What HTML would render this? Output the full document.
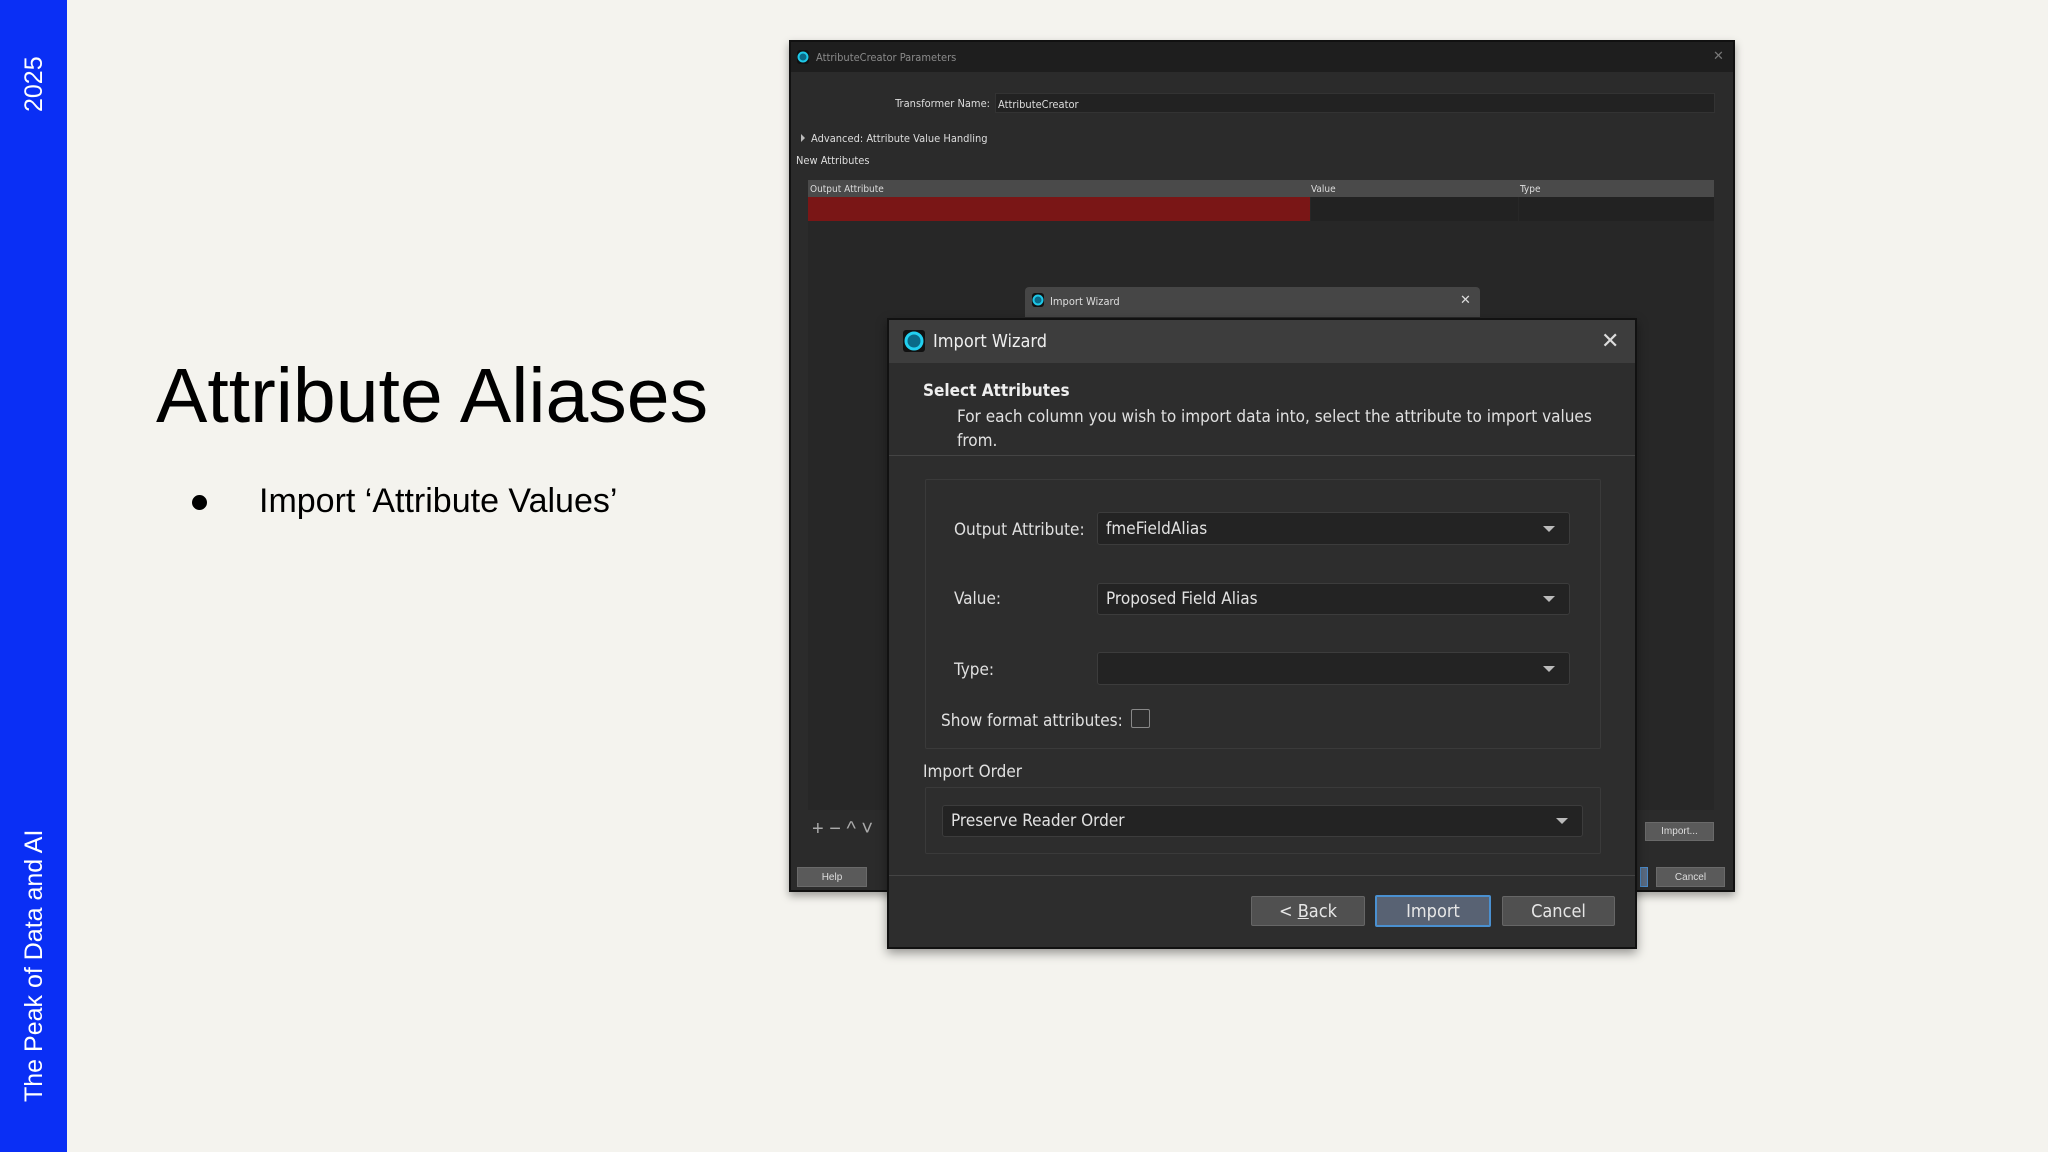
<!DOCTYPE html>
<html><head><meta charset="utf-8"><style>
*{margin:0;padding:0;box-sizing:border-box}
body{width:2048px;height:1152px;background:#f4f3ee;position:relative;overflow:hidden;font-family:"Liberation Sans",sans-serif}
.a{position:absolute}
.side{left:0;top:0;width:67px;height:1152px;background:#0a2ff5}
.vt{color:#fff;font-size:25px;white-space:nowrap;transform-origin:0 0;transform:rotate(-90deg)}
.ui{font-family:"DejaVu Sans Condensed","Liberation Sans Narrow","Liberation Sans",sans-serif}
.combo{position:absolute;background:#232323;border:1px solid #3c3c3c;border-radius:3px;color:#e2e2e2;font-size:17px;padding-left:8px;display:flex;align-items:center}
.combo:after{content:"";position:absolute;right:14px;top:50%;margin-top:-3px;border-left:6px solid transparent;border-right:6px solid transparent;border-top:6px solid #bbb}
.lbl{position:absolute;color:#e0e0e0;font-size:17px;transform:translateY(-50%)}
.btn{position:absolute;background:#505050;border:1px solid #666;border-radius:2px;color:#e6e6e6;font-size:18px;display:flex;align-items:center;justify-content:center}
.sb{position:absolute;background:#5a5a5a;border:1px solid #6a6a6a;color:#ddd;font-size:10px;display:flex;align-items:center;justify-content:center}
.ico{position:absolute;background:#111;border-radius:3px}
.ico:after{content:"";position:absolute;left:50%;top:50%;width:7px;height:7px;transform:translate(-50%,-50%);border-radius:50%;border:2px solid #1ec8e8;background:#0a6a88}
.ico.big:after{width:13px;height:13px;border:3px solid #22d0f0;background:#0a6a88}
</style></head><body>
<div class="a side"></div>
<div class="a vt" style="left:20px;top:112px">2025</div>
<div class="a vt" style="left:20px;top:1102px">The Peak of Data and AI</div>
<div class="a" style="left:156px;top:352px;font-size:77px;color:#000;white-space:nowrap">Attribute Aliases</div>
<div class="a" style="left:192px;top:495px;width:15px;height:15px;border-radius:50%;background:#000"></div>
<div class="a" style="left:259px;top:482px;font-size:34px;color:#000;white-space:nowrap">Import ‘Attribute Values’</div>

<div class="a" style="left:789px;top:40px;width:946px;height:852px;background:#2b2b2b;border:2px solid #111;box-shadow:0 4px 8px rgba(0,0,0,.35)"></div>
<div class="a" style="left:791px;top:42px;width:942px;height:30px;background:#1e1e1e"></div>
<div class="ico" style="left:797px;top:50px;width:12px;height:14px"></div>
<div class="a ui" style="left:816px;top:51px;font-size:11px;color:#8a8a8a">AttributeCreator Parameters</div>
<div class="a" style="left:1713px;top:48px;font-size:13px;color:#777">✕</div>
<div class="a ui" style="left:860px;top:97px;width:130px;text-align:right;font-size:11px;color:#ddd">Transformer Name:</div>
<div class="a" style="left:995px;top:93px;width:720px;height:20px;background:#222;border:1px solid #333"></div>
<div class="a ui" style="left:998px;top:98px;font-size:11px;color:#ddd">AttributeCreator</div>
<div class="a" style="left:801px;top:134px;border-top:4px solid transparent;border-bottom:4px solid transparent;border-left:4px solid #bbb"></div>
<div class="a ui" style="left:811px;top:132px;font-size:11px;color:#ddd">Advanced: Attribute Value Handling</div>
<div class="a ui" style="left:796px;top:154px;font-size:11px;color:#ddd">New Attributes</div>
<div class="a" style="left:808px;top:180px;width:906px;height:630px;background:#272727"></div>
<div class="a" style="left:808px;top:180px;width:906px;height:17px;background:#4a4a4a"></div>
<div class="a ui" style="left:810px;top:184px;font-size:10px;color:#ddd">Output Attribute</div>
<div class="a ui" style="left:1311px;top:184px;font-size:10px;color:#ddd">Value</div>
<div class="a ui" style="left:1520px;top:184px;font-size:10px;color:#ddd">Type</div>
<div class="a" style="left:808px;top:197px;width:502px;height:24px;background:#7a1616"></div>
<div class="a" style="left:1311px;top:197px;width:207px;height:24px;background:#222"></div>
<div class="a" style="left:1519px;top:197px;width:195px;height:24px;background:#222"></div>
<div class="a" style="left:1025px;top:287px;width:455px;height:30px;background:#464646;border-radius:4px 4px 0 0"></div>
<div class="ico" style="left:1032px;top:293px;width:12px;height:14px"></div>
<div class="a ui" style="left:1050px;top:295px;font-size:11px;color:#ddd">Import Wizard</div>
<div class="a" style="left:1460px;top:292px;font-size:13px;color:#ddd">✕</div>
<div class="a" style="left:812px;top:818px;font-size:20px;color:#aaa">+ − ^ ˅</div>
<div class="sb" style="left:1645px;top:822px;width:69px;height:19px">Import...</div>
<div class="sb" style="left:797px;top:867px;width:70px;height:20px">Help</div>
<div class="sb" style="left:1656px;top:867px;width:69px;height:20px">Cancel</div>
<div class="a" style="left:1640px;top:867px;width:8px;height:20px;background:#5a6a80;border:1px solid #4a8ac8"></div>

<div class="a" style="left:887px;top:318px;width:750px;height:631px;background:#2d2d2d;border:2px solid #111;box-shadow:0 4px 10px rgba(0,0,0,.4)"></div>
<div class="a" style="left:889px;top:320px;width:746px;height:43px;background:#3d3d3d"></div>
<div class="ico big" style="left:903px;top:330px;width:22px;height:22px"></div>
<div class="a ui" style="left:933px;top:331px;font-size:18px;color:#eee">Import Wizard</div>
<div class="a" style="left:1601px;top:328px;font-size:22px;color:#ddd">✕</div>
<div class="a ui" style="left:923px;top:381px;font-size:17px;font-weight:bold;color:#eee">Select Attributes</div>
<div class="a ui" style="left:957px;top:405px;font-size:17px;color:#e0e0e0;line-height:24px;width:640px">For each column you wish to import data into, select the attribute to import values from.</div>
<div class="a" style="left:889px;top:455px;width:746px;height:1px;background:#444"></div>
<div class="a" style="left:925px;top:479px;width:676px;height:270px;border:1px solid #3a3a3a;border-radius:2px"></div>
<div class="lbl ui" style="left:954px;top:530px">Output Attribute:</div>
<div class="combo ui" style="left:1097px;top:512px;width:473px;height:33px">fmeFieldAlias</div>
<div class="lbl ui" style="left:954px;top:599px">Value:</div>
<div class="combo ui" style="left:1097px;top:583px;width:473px;height:32px">Proposed Field Alias</div>
<div class="lbl ui" style="left:954px;top:670px">Type:</div>
<div class="combo ui" style="left:1097px;top:652px;width:473px;height:33px"></div>
<div class="lbl ui" style="left:941px;top:721px">Show format attributes:</div>
<div class="a" style="left:1131px;top:709px;width:19px;height:19px;border:1px solid #888;border-radius:2px"></div>
<div class="lbl ui" style="left:923px;top:772px">Import Order</div>
<div class="a" style="left:925px;top:787px;width:676px;height:67px;border:1px solid #3a3a3a;border-radius:2px"></div>
<div class="combo ui" style="left:942px;top:805px;width:641px;height:32px">Preserve Reader Order</div>
<div class="a" style="left:889px;top:875px;width:746px;height:1px;background:#444"></div>
<div class="btn ui" style="left:1251px;top:896px;width:114px;height:30px">&lt;&nbsp;<u>B</u>ack</div>
<div class="btn ui" style="left:1375px;top:895px;width:116px;height:32px;background:#586273;border:2px solid #4a90d0">Import</div>
<div class="btn ui" style="left:1502px;top:896px;width:113px;height:30px">Cancel</div>
</body></html>
